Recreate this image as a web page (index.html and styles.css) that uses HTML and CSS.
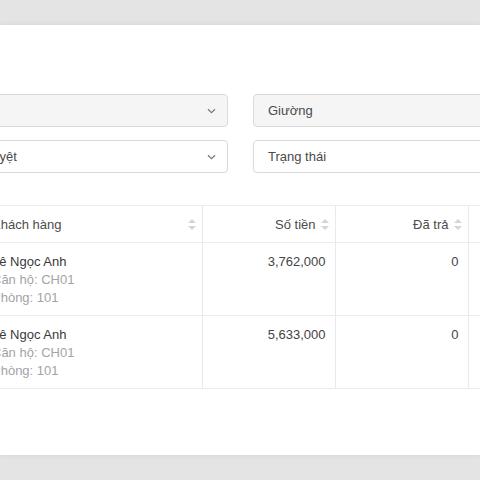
FILE: index.html
```html
<!DOCTYPE html>
<html lang="vi">
<head>
<meta charset="utf-8">
<link rel="stylesheet" href="styles.css">
</head>
<body>
<div class="viewport">
  <div class="card">
    <div class="content">
      <div class="filters">
        <div class="field field-disabled">
          <span class="field-text"></span>
          <svg class="chev" width="9" height="6" viewBox="0 0 9 6"><path d="M1 1.2 L4.5 4.6 L8 1.2" fill="none" stroke="#7a7a7a" stroke-width="1.3"/></svg>
        </div>
        <div class="field field-disabled">
          <span class="field-text">Giường</span>
        </div>
        <div class="field">
          <span class="field-text">Duyệt</span>
          <svg class="chev" width="9" height="6" viewBox="0 0 9 6"><path d="M1 1.2 L4.5 4.6 L8 1.2" fill="none" stroke="#7a7a7a" stroke-width="1.3"/></svg>
        </div>
        <div class="field">
          <span class="field-text">Trạng thái</span>
        </div>
      </div>

      <table class="grid">
        <colgroup>
          <col class="c1"><col class="c2"><col class="c3"><col class="c4">
        </colgroup>
        <thead>
          <tr>
            <th><div class="th th-left"><span>Khách hàng</span><span class="sort"></span></div></th>
            <th><div class="th th-right"><span>Số tiền</span><span class="sort"></span></div></th>
            <th><div class="th th-right"><span>Đã trả</span><span class="sort"></span></div></th>
            <th><div class="th th-right"><span>Còn nợ</span><span class="sort"></span></div></th>
          </tr>
        </thead>
        <tbody>
          <tr>
            <td><div class="name">Lê Ngọc Anh</div><div class="sub">Căn hộ: CH01</div><div class="sub">Phòng: 101</div></td>
            <td class="num">3,762,000</td>
            <td class="num">0</td>
            <td class="num">3,762,000</td>
          </tr>
          <tr>
            <td><div class="name">Lê Ngọc Anh</div><div class="sub">Căn hộ: CH01</div><div class="sub">Phòng: 101</div></td>
            <td class="num">5,633,000</td>
            <td class="num">0</td>
            <td class="num">5,633,000</td>
          </tr>
        </tbody>
      </table>
    </div>
  </div>
</div>
</body>
</html>
```

FILE: styles.css
```css
html, body {
  margin: 0;
  padding: 0;
}

body {
  background: #e4e4e4;
  font-family: "Liberation Sans", Arial, sans-serif;
  font-size: 13px;
  color: #3a3a3a;
}

.viewport {
  width: 480px;
  height: 480px;
  overflow: hidden;
}

.card {
  margin-top: 25px;
  height: 430px;
  background: #ffffff;
  box-shadow: 0 0 6px rgba(0, 0, 0, 0.08);
  overflow: hidden;
}

.content {
  margin-left: -32px;
  width: 640px;
  padding-top: 69px;
}

.filters {
  display: grid;
  grid-template-columns: 260px 260px;
  grid-auto-rows: 33px;
  column-gap: 25px;
  row-gap: 13px;
}

.field {
  box-sizing: border-box;
  display: flex;
  align-items: center;
  justify-content: space-between;
  border: 1px solid #dadada;
  border-radius: 4px;
  background: #ffffff;
  padding: 0 8px 0 14px;
  color: #4a4a4a;
}

.field-disabled {
  background: #f5f5f5;
}

.field-text {
  line-height: 18px;
}

.chev {
  display: block;
  margin-right: 3px;
}

.grid {
  margin-top: 32px;
  border-collapse: collapse;
  table-layout: fixed;
  width: 633px;
  border-top: 1px solid #ebebf0;
}

.c1 { width: 234px; }
.c2 { width: 133px; }
.c3 { width: 133px; }
.c4 { width: 133px; }

.grid th,
.grid td {
  border-right: 1px solid #e9e9ef;
  border-bottom: 1px solid #ebebf1;
}

.grid th {
  height: 36px;
  padding: 0 6px 0 24px;
  font-weight: normal;
  color: #4c4c4c;
  text-align: left;
}

.th {
  display: flex;
  align-items: center;
  gap: 5px;
}

.th-left {
  justify-content: space-between;
}

.th-right {
  justify-content: flex-end;
}

.sort {
  position: relative;
  width: 8px;
  height: 11px;
  flex: none;
}

.sort::before,
.sort::after {
  content: "";
  position: absolute;
  left: 0;
  border-left: 4px solid transparent;
  border-right: 4px solid transparent;
}

.sort::before {
  top: 0;
  border-bottom: 4px solid #d4d4dc;
}

.sort::after {
  bottom: 0;
  border-top: 4px solid #d4d4dc;
}

.grid td {
  padding: 10px 9px 8px 24px;
  vertical-align: top;
  line-height: 18px;
}

.grid td.num {
  text-align: right;
  color: #444;
}

.name {
  color: #3a3a3a;
}

.sub {
  color: #a3a3a8;
}
```
